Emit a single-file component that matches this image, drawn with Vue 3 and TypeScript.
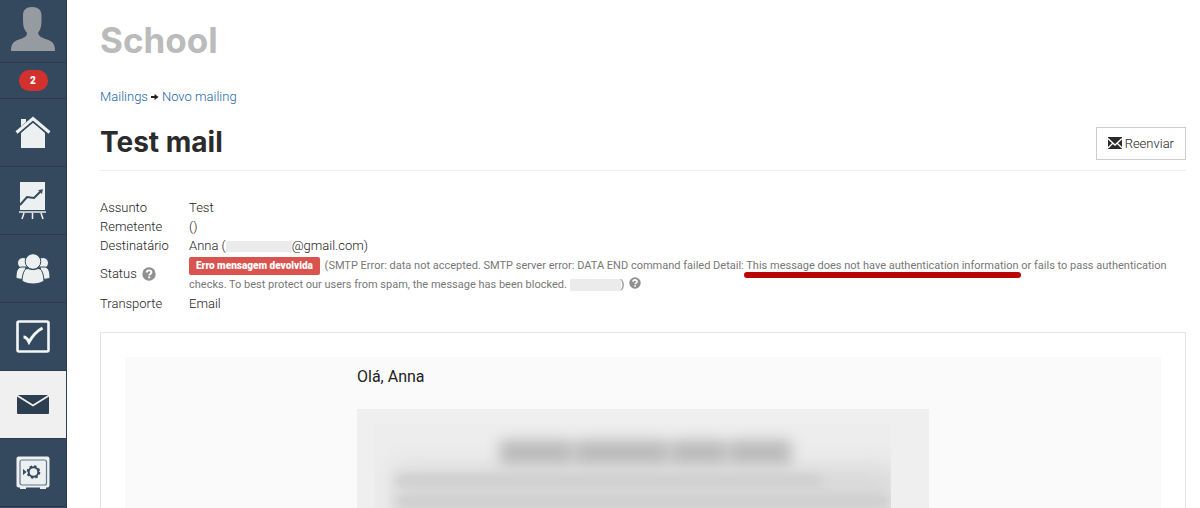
<script setup lang="ts">
interface NavItem {
  id: string
  label: string
  active?: boolean
}

const navItems: NavItem[] = [
  { id: 'home', label: 'Home' },
  { id: 'stats', label: 'Estatísticas' },
  { id: 'users', label: 'Utilizadores' },
  { id: 'tasks', label: 'Tarefas' },
  { id: 'mail', label: 'Mailings', active: true },
  { id: 'safe', label: 'Cofre' },
]
</script>

<template>
  <div class="page">
    <nav class="sidebar">
      <a class="profile" href="#" aria-label="Perfil">
        <svg width="46" height="44" viewBox="0 0 46 44" fill="#959ba1">
          <path d="M22 0c6 0 9.500 3 9.500 8v6c0 5-1 9-3.500 12 1 4 5 5 9 6.500 6 2 8 5 8 11.500H1c0-6.500 2-9.500 8-11.500 4-1.500 8-2.500 8-6.500-3-3-4-7-4-12V8c0-5 3-8 9-8z" />
        </svg>
      </a>
      <a class="notices" href="#"><span class="count">2</span></a>
      <a
        v-for="item in navItems"
        :key="item.id"
        class="nav-item"
        :class="{ active: item.active }"
        href="#"
        :aria-label="item.label"
      >
        <svg v-if="item.id === 'home'" width="36" height="34" viewBox="0 0 36 34">
          <path d="M6 17 18 6l12 11v15H6z" fill="#ecf0f1" />
          <path d="M1.500 16.500 18 3l16.500 13.500" fill="none" stroke="#34495e" stroke-width="6" />
          <path d="M6 3h5v3l-5 4.500z" fill="#ecf0f1" />
          <path d="M1.500 16.500 18 2.500l16.500 14" fill="none" stroke="#ecf0f1" stroke-width="3" />
        </svg>
        <svg v-else-if="item.id === 'stats'" width="28" height="38" viewBox="0 0 28 38">
          <path d="M1 0h25v28H1z" fill="#ecf0f1" />
          <path d="m1 23 7-8 7 1 6-6" fill="none" stroke="#34495e" stroke-width="2" />
          <path d="m19.500 8.500 4-1-.8 4z" fill="#34495e" stroke="#34495e" stroke-width=".6" />
          <path d="M0 30h27M5 31 3 37M13.500 31v6M22 31l2 6" fill="none" stroke="#ecf0f1" stroke-width="1.500" />
        </svg>
        <svg v-else-if="item.id === 'users'" width="36" height="32" viewBox="0 0 36 32" fill="#ecf0f1" stroke="#34495e">
          <circle cx="8" cy="10" r="5.500" />
          <circle cx="28" cy="10" r="5.500" />
          <path d="M1 25c0-6 1-11 6-11h4l-3 12c-3 .5-5 0-7-1zM35 25c0-6-1-11-6-11h-4l3 12c3 .5 5 0 7-1z" />
          <circle cx="18" cy="8.500" r="7.800" />
          <path d="M7 28c.5-7 2-12.500 6-12.500 3 1.500 7 1.500 10 0 4 0 5.500 5.500 6 12.500-6 4-16 4-22 0z" />
        </svg>
        <svg v-else-if="item.id === 'tasks'" width="34" height="34" viewBox="0 0 34 34" fill="none" stroke="#f4f6f7">
          <rect x="1.500" y="1.500" width="31" height="30" rx="1.500" stroke-width="2.600" />
          <path d="M7.500 17c2.500 0 4 2 5.500 5C17 15 21 11 26.500 8" stroke-width="3" />
        </svg>
        <svg v-else-if="item.id === 'mail'" width="34" height="22" viewBox="0 0 34 22">
          <rect x="1" y="1" width="32" height="19" rx="1" fill="#2c3e50" />
          <path d="m1 1.500 16 10 16-10" fill="none" stroke="#f0f0f0" stroke-width="1.800" />
        </svg>
        <svg v-else width="34" height="34" viewBox="0 0 34 34">
          <path d="M4 30h6v3H4zM24 30h6v3h-6z" fill="#ecf0f1" />
          <rect x="0.500" y="0.500" width="33" height="31" rx="2" fill="#ecf0f1" />
          <rect x="4" y="4" width="26.500" height="25" rx="2" fill="none" stroke="#60748a" stroke-width="1.200" />
          <circle cx="17.500" cy="16" r="4.800" fill="none" stroke="#34495e" stroke-width="2" />
          <circle cx="17.500" cy="16" r="6" fill="none" stroke="#34495e" stroke-width="1.600" stroke-dasharray="2.500 2.200" />
          <path d="m7 13 3.500 3L7 19z" fill="#34495e" />
        </svg>
      </a>
    </nav>

    <main class="content">
      <div class="brand">School</div>
      <nav class="crumbs">
        <a href="#">Mailings</a>
        <svg width="8" height="8" viewBox="0 0 9 8">
          <path d="M0 3h4V.5L8.500 4 4 7.500V5H0z" fill="#222" />
        </svg>
        <a href="#">Novo mailing</a>
      </nav>
      <header class="title-row">
        <h1>Test mail</h1>
        <button class="resend" type="button">
          <svg width="14" height="12" viewBox="0 0 14 12">
            <path d="M0 0h14v12H0z" fill="#2b2b2b" />
            <path d="m0 1.500 7 6.500 7-6.500M0 11l5-5M14 11 9 6" fill="none" stroke="#fff" stroke-width="1.300" />
          </svg>
          <span>Reenviar</span>
        </button>
      </header>

      <dl class="details">
        <dt>Assunto</dt>
        <dd>Test</dd>
        <dt>Remetente</dt>
        <dd>()</dd>
        <dt>Destinatário</dt>
        <dd>Anna (<span class="redacted address"></span>@gmail.com)</dd>
        <dt class="status-label">
          Status
          <svg width="14" height="14" viewBox="0 0 14 14">
            <circle cx="7" cy="7" r="6.700" fill="#909090" />
            <path d="M4.700 5.600C4.700 2.600 9.500 2.700 9.400 5.400 9.300 7 7.200 6.900 7.200 8.600" fill="none" stroke="#fff" stroke-width="1.900" />
            <path d="M6.200 9.500h2v1.800h-2z" fill="#fff" />
          </svg>
        </dt>
        <dd class="status">
          <span class="tag">Erro mensagem devolvida</span>
          (SMTP Error: data not accepted. SMTP server error: DATA END command failed Detail:
          <span class="marked">This message does not have authentication information</span>
          or fails to pass authentication<br>
          checks. To best protect our users from spam, the message has been blocked.
          <span class="redacted code"></span>)
          <svg class="small" width="12" height="12" viewBox="0 0 14 14">
            <circle cx="7" cy="7" r="6.700" fill="#909090" />
            <path d="M4.700 5.600C4.700 2.600 9.500 2.700 9.400 5.400 9.300 7 7.200 6.900 7.200 8.600" fill="none" stroke="#fff" stroke-width="1.900" />
            <path d="M6.200 9.500h2v1.800h-2z" fill="#fff" />
          </svg>
        </dd>
        <dt>Transporte</dt>
        <dd>Email</dd>
      </dl>

      <section class="preview">
        <div class="mail">
          <div class="mail-body">
            <p>Olá, Anna</p>
            <div class="card">
              <div class="obscured">
                <div class="haze"></div>
                <div class="heading">
                  <i class="w1"></i><i class="w2"></i><i class="w3"></i><i class="w4"></i>
                </div>
                <div class="line short"></div>
                <div class="line"></div>
              </div>
            </div>
          </div>
        </div>
      </section>
    </main>
  </div>
</template>

<style>
body {
  margin: 0;
  background: #fff;
}
</style>

<style scoped>
.page {
  display: flex;
  height: 100vh;
  overflow: hidden;
  font-family: Roboto, "Liberation Sans", sans-serif;
  font-size: 13px;
  font-weight: 300;
  line-height: 19px;
  color: #222;
}
.sidebar {
  flex: none;
  width: 66px;
  border-right: 1px solid #2b3d50;
  background: #34495e;
}
.sidebar a {
  display: flex;
  align-items: center;
  justify-content: center;
  box-sizing: border-box;
  border-bottom: 1px solid #293b4d;
  text-decoration: none;
}
.sidebar .profile {
  height: 63px;
  padding-bottom: 5px;
}
.sidebar .notices {
  height: 36px;
}
.count {
  width: 29px;
  border-radius: 10px;
  background: #d2322d;
  color: #fff;
  font: 900 10px/21px Roboto, sans-serif;
  text-align: center;
}
.sidebar .nav-item {
  height: 68px;
}
.sidebar .active {
  background: #f0f0f0;
}
.content {
  flex: 1;
  min-width: 0;
  padding: 19px 14px 0 33px;
}
.brand {
  color: #bbb;
  font: 700 35px/42px Inter, sans-serif;
}
.crumbs {
  display: flex;
  align-items: center;
  gap: 3px;
  margin-top: 26px;
}
.crumbs a {
  color: #1767a3;
  text-decoration: none;
}
.title-row {
  display: flex;
  align-items: center;
  justify-content: space-between;
  margin-top: 16px;
  padding: 4px 0 10px;
  border-bottom: 1px solid #eee;
}
h1 {
  margin: 0;
  padding-bottom: 2px;
  color: #2b2b2b;
  font: 700 28px/32px Inter, sans-serif;
}
.resend {
  display: flex;
  align-items: center;
  gap: 3px;
  height: 33px;
  padding: 0 11px;
  border: 1px solid #ccc;
  background: #fff;
  color: #222;
  font: inherit;
}
.details {
  display: grid;
  grid-template-columns: 89px 1fr;
  margin: 27px 0 0;
}
.details dd {
  margin: 0;
}
.status-label {
  display: flex;
  align-items: center;
  gap: 5px;
  padding-bottom: 2px;
}
.details .status {
  padding-top: 1px;
  color: #777;
  font-size: 11px;
  font-weight: 400;
  white-space: nowrap;
}
.tag {
  display: inline-block;
  margin-right: 2px;
  padding: 0 7px;
  border-radius: 2px;
  background: #d9534f;
  color: #fff;
  font-size: 10px;
  font-weight: 900;
  line-height: 18px;
}
.marked {
  position: relative;
}
.marked::after {
  content: "";
  position: absolute;
  right: -2px;
  bottom: -6px;
  left: -2px;
  height: 6px;
  border-radius: 3px;
  background: #b90504;
}
.redacted {
  display: inline-block;
  background: #ebebeb;
}
.address {
  width: 66px;
  height: 11px;
  vertical-align: -2px;
}
.code {
  width: 51px;
  height: 12px;
  vertical-align: -3px;
}
.small {
  margin-left: 2px;
  vertical-align: -1px;
}
.preview {
  height: 400px;
  margin-top: 19px;
  padding: 24px;
  border: 1px solid #e4e4e4;
}
.mail {
  height: 400px;
  background: #fafafa;
}
.mail-body {
  width: 572px;
  margin: 0 auto;
  padding-top: 10px;
}
.mail-body p {
  margin: 0 0 22px;
  font-size: 16px;
  font-weight: 400;
  line-height: 20px;
}
.card {
  padding: 15px 38px 0 17px;
  background: #efefef;
}
.obscured {
  position: relative;
  height: 200px;
  overflow: hidden;
  background: #ededed;
}
.haze {
  position: absolute;
  inset: 42px -5px 0 20px;
  background: #d8d8d8;
  filter: blur(12px);
}
.heading {
  position: relative;
  display: flex;
  gap: 3px;
  margin: 16px 100px 0 126px;
  filter: blur(7px);
}
.heading i {
  height: 25px;
  background: #bbb;
}
.w1 {
  flex: 65;
}
.w2 {
  flex: 85;
}
.w3 {
  flex: 50;
}
.w4 {
  flex: 56;
}
.line {
  position: relative;
  height: 11px;
  margin: 10px 3px 0 22px;
  background: #cecece;
  filter: blur(5px);
}
.short {
  margin-right: 70px;
}
</style>
